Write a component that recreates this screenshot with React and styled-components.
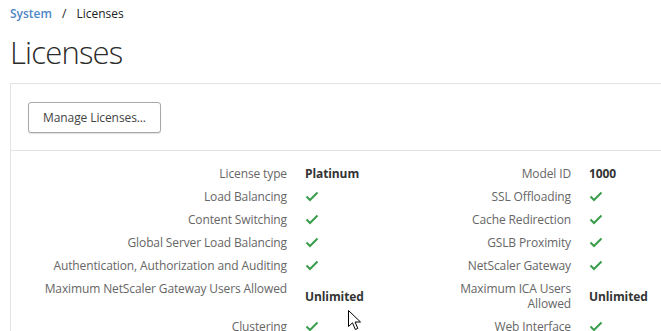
import styled, { createGlobalStyle } from "styled-components";

const GlobalStyle = createGlobalStyle`
  html, body {
    margin: 0;
    padding: 0;
    background: #fff;
    overflow: hidden;
  }
  body {
    font-family: "Open Sans", "Noto Sans", sans-serif;
    color: #333;
  }
`;

const left = [
  { label: "License type", value: "Platinum" },
  { label: "Load Balancing", check: true },
  { label: "Content Switching", check: true },
  { label: "Global Server Load Balancing", check: true },
  { label: "Authentication, Authorization and Auditing", check: true },
  { label: "Maximum NetScaler Gateway Users Allowed", value: "Unlimited" },
  { label: "Clustering", check: true },
];

const right = [
  { label: "Model ID", value: "1000" },
  { label: "SSL Offloading", check: true },
  { label: "Cache Redirection", check: true },
  { label: "GSLB Proximity", check: true },
  { label: "NetScaler Gateway", check: true },
  { label: "Maximum ICA Users Allowed", value: "Unlimited" },
  { label: "Web Interface", check: true },
];

const Check = () => (
  <svg width="14" height="11" viewBox="0 0 14 11">
    <polyline
      points="1.5,5.5 5,9 12.5,1.5"
      fill="none"
      stroke="#3a9d4c"
      strokeWidth="2"
    />
  </svg>
);

const Cursor = () => (
  <svg width="14" height="22" viewBox="0 0 14 22">
    <path
      d="M0.5 0.5 L0.5 16.5 L4.5 12.8 L7.3 19.5 L9.8 18.4 L7.1 12 L12.5 12 Z"
      fill="#fff"
      stroke="#000"
      strokeWidth="1"
      strokeLinejoin="round"
    />
  </svg>
);

const App = () => {
  return (
    <Page>
      <GlobalStyle />
      <Breadcrumb>
        <Crumb>System</Crumb>
        <Sep>/</Sep>
        <span>Licenses</span>
      </Breadcrumb>
      <Title>Licenses</Title>
      <Panel>
        <Toolbar>
          <Button>Manage Licenses...</Button>
        </Toolbar>
        <Details>
          {left.map((l, i) => {
            const r = right[i];
            return [
              <Label key={"ll" + i}>{l.label}</Label>,
              <Value key={"lv" + i}>{l.check ? <Check /> : l.value}</Value>,
              <Label key={"rl" + i}>{r.label}</Label>,
              <Value key={"rv" + i}>{r.check ? <Check /> : r.value}</Value>,
            ];
          })}
        </Details>
      </Panel>
      <Pointer>
        <Cursor />
      </Pointer>
    </Page>
  );
};

const Page = styled.div`
  position: relative;
  width: 661px;
  height: 331px;
  overflow: hidden;
  padding-left: 10px;
  box-sizing: border-box;
`;

const Breadcrumb = styled.div`
  display: flex;
  align-items: center;
  height: 26px;
  font-size: 12px;
  color: #222;
`;

const Crumb = styled.span`
  color: #4f87c5;
  font-weight: 600;
`;

const Sep = styled.span`
  margin: 0 10px;
`;

const Title = styled.h1`
  margin: 0;
  height: 57px;
  padding-top: 6px;
  box-sizing: border-box;
  font-size: 31px;
  font-weight: 300;
  letter-spacing: -0.8px;
  line-height: 40px;
  color: #2b2b2b;
`;

const Panel = styled.div`
  border: 1px solid #e3e3e3;
  border-right: none;
  width: 700px;
`;

const Toolbar = styled.div`
  padding: 18px 17px 17px;
  border-bottom: 1px solid #e3e3e3;
`;

const Button = styled.button`
  width: 133px;
  height: 31px;
  background: #fff;
  border: 1px solid #a8a8a8;
  border-radius: 3px;
  box-shadow: 0 1px 1px rgba(0, 0, 0, 0.12);
  font-family: "Open Sans", "Noto Sans", sans-serif;
  font-size: 12px;
  letter-spacing: -0.1px;
  color: #444;
  padding: 0;
`;

const Details = styled.div`
  display: grid;
  grid-template-columns: 276px 108px 140px auto;
  column-gap: 18px;
  row-gap: 8px;
  padding-top: 15px;
`;

const Label = styled.div`
  text-align: right;
  font-size: 12px;
  letter-spacing: -0.12px;
  line-height: 15px;
  color: #666;
  align-self: start;
`;

const Value = styled.div`
  display: flex;
  align-items: center;
  align-self: center;
  font-size: 12px;
  letter-spacing: -0.1px;
  line-height: 15px;
  font-weight: 700;
  color: #333;
`;

const Pointer = styled.div`
  position: absolute;
  left: 348px;
  top: 310px;
  line-height: 0;
`;

export default App;
